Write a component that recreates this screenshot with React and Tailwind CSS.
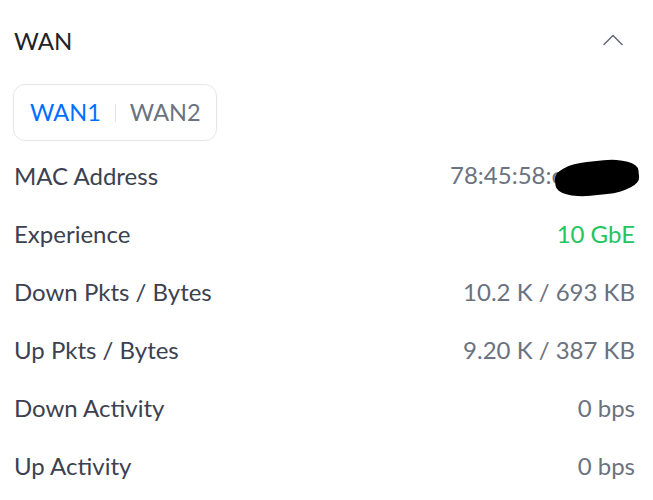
const rows = [
    { label: 'MAC Address', value: '78:45:58:c', mac: true },
    { label: 'Experience', value: '10 GbE', green: true },
    { label: 'Down Pkts / Bytes', value: '10.2 K / 693 KB' },
    { label: 'Up Pkts / Bytes', value: '9.20 K / 387 KB' },
    { label: 'Down Activity', value: '0 bps' },
    { label: 'Up Activity', value: '0 bps' },
];

export default function App() {
    return (
        <div className="w-[653px] h-[500px] bg-white overflow-hidden pl-[14px] pr-[18px]" style={{ fontFamily: 'Lato, "Noto Sans", sans-serif' }}>
            {/* Header */}
            <div className="flex items-center justify-between h-[82px]">
                <span className="text-[24px] text-[#212327]">WAN</span>
                <svg width="22" height="12" viewBox="0 0 22 12" className="mr-[11px] -mt-[2px]" fill="none">
                    <path d="M1.5 11 L11 1.5 L20.5 11" stroke="#5b6270" strokeWidth="1.3" />
                </svg>
            </div>

            {/* Tabs */}
            <div className="inline-flex items-center h-[57px] pl-[16px] pr-[15px] rounded-xl border border-[#e4e6ea] -ml-px mt-[2px] text-[23.5px]">
                <span className="text-[#006fff]">WAN1</span>
                <span className="w-px h-[18px] bg-[#e1e3e7] mx-[14px]" />
                <span className="text-[#6b7280]">WAN2</span>
            </div>

            {/* Rows */}
            <div className="flex flex-col mt-[6px]">
                {rows.map(row => (
                    <div key={row.label} className="flex items-center justify-between h-[58px] text-[24px]">
                        <span className="text-[#3b4150]">{row.label}</span>
                        <span className={`relative ${row.green ? 'text-[#22c55e]' : 'text-[#6b7280]'}`}>
                            {row.value}
                            {row.mac && (
                                <span className="inline-block align-middle w-[84px] h-[34px] bg-black rounded-[40%] -ml-[8px] -mr-[4px] -rotate-6" />
                            )}
                        </span>
                    </div>
                ))}
            </div>
        </div>
    );
}
